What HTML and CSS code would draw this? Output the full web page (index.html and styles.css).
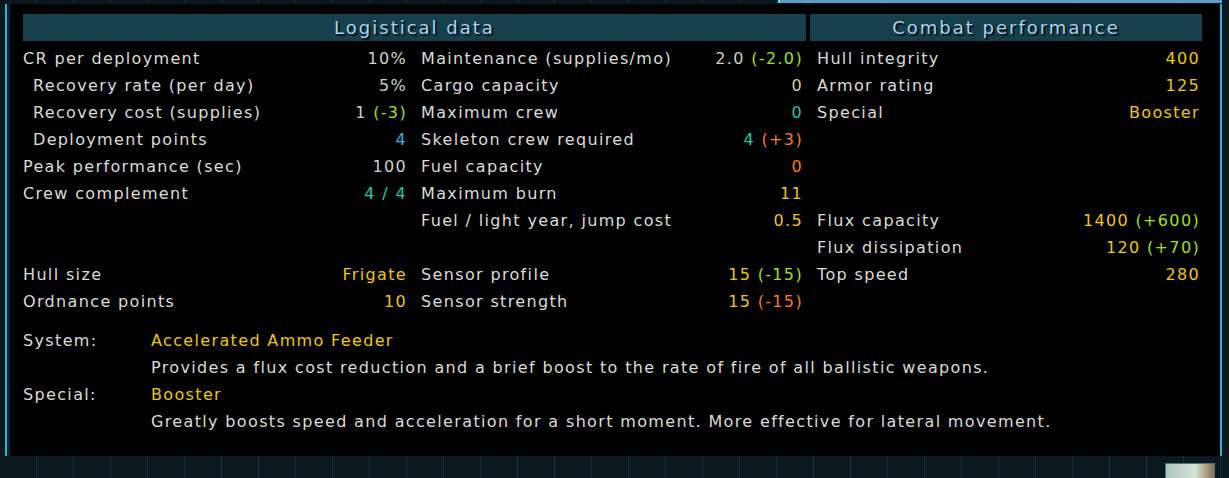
FILE: index.html
```html
<!DOCTYPE html>
<html>
<head>
<meta charset="utf-8">
<link rel="stylesheet" href="styles.css">
</head>
<body>
<div class="screen">
  <div class="topbar"><div class="tab"></div></div>
  <div class="panel">
    <div class="heads">
      <div class="head h1">Logistical data</div>
      <div class="head h2">Combat performance</div>
    </div>
    <div class="cols">
      <div class="col">
        <div class="row"><span class="lbl">CR per deployment</span><span class="val">10%</span></div>
        <div class="row"><span class="lbl ind">Recovery rate (per day)</span><span class="val">5%</span></div>
        <div class="row"><span class="lbl ind">Recovery cost (supplies)</span><span class="val">1 <span class="grn">(-3)</span></span></div>
        <div class="row"><span class="lbl ind">Deployment points</span><span class="val blu">4</span></div>
        <div class="row"><span class="lbl">Peak performance (sec)</span><span class="val">100</span></div>
        <div class="row"><span class="lbl">Crew complement</span><span class="val teal">4 / 4</span></div>
        <div class="row"></div>
        <div class="row"></div>
        <div class="row"><span class="lbl">Hull size</span><span class="val yel">Frigate</span></div>
        <div class="row"><span class="lbl">Ordnance points</span><span class="val yel">10</span></div>
      </div>
      <div class="col">
        <div class="row"><span class="lbl">Maintenance (supplies/mo)</span><span class="val">2.0 <span class="grn">(-2.0)</span></span></div>
        <div class="row"><span class="lbl">Cargo capacity</span><span class="val tan">0</span></div>
        <div class="row"><span class="lbl">Maximum crew</span><span class="val teal">0</span></div>
        <div class="row"><span class="lbl">Skeleton crew required</span><span class="val teal">4 <span class="org">(+3)</span></span></div>
        <div class="row"><span class="lbl">Fuel capacity</span><span class="val org">0</span></div>
        <div class="row"><span class="lbl">Maximum burn</span><span class="val yel">11</span></div>
        <div class="row"><span class="lbl">Fuel / light year, jump cost</span><span class="val yel">0.5</span></div>
        <div class="row"></div>
        <div class="row"><span class="lbl">Sensor profile</span><span class="val yel">15 <span class="grn">(-15)</span></span></div>
        <div class="row"><span class="lbl">Sensor strength</span><span class="val yel">15 <span class="org">(-15)</span></span></div>
      </div>
      <div class="col">
        <div class="row"><span class="lbl">Hull integrity</span><span class="val yel">400</span></div>
        <div class="row"><span class="lbl">Armor rating</span><span class="val yel">125</span></div>
        <div class="row"><span class="lbl">Special</span><span class="val yel">Booster</span></div>
        <div class="row"></div>
        <div class="row"></div>
        <div class="row"></div>
        <div class="row"><span class="lbl">Flux capacity</span><span class="val yel">1400 <span class="grn">(+600)</span></span></div>
        <div class="row"><span class="lbl">Flux dissipation</span><span class="val yel">120 <span class="grn">(+70)</span></span></div>
        <div class="row"><span class="lbl">Top speed</span><span class="val yel">280</span></div>
        <div class="row"></div>
      </div>
    </div>
    <div class="info">
      <div class="ilbl">System:</div>
      <div class="iname">Accelerated Ammo Feeder</div>
      <div></div>
      <div class="idesc">Provides a flux cost reduction and a brief boost to the rate of fire of all ballistic weapons.</div>
      <div class="ilbl">Special:</div>
      <div class="iname">Booster</div>
      <div></div>
      <div class="idesc">Greatly boosts speed and acceleration for a short moment. More effective for lateral movement.</div>
    </div>
  </div>
  <div class="bottom"><div class="thumb"></div></div>
</div>
</body>
</html>
```

FILE: styles.css
```css
* { box-sizing: border-box; }
html, body { margin: 0; padding: 0; }
body {
  width: 1229px;
  height: 478px;
  overflow: hidden;
  background-color: #0b181e;
  background-image: repeating-linear-gradient(90deg, transparent 0 36px, #16303a 36px 37px);
  font-family: "DejaVu Sans", "Liberation Sans", sans-serif;
  font-size: 16px;
  letter-spacing: 1.35px;
  color: #dadcd6;
}
.screen { display: flex; flex-direction: column; width: 1229px; height: 478px; }
.topbar { height: 4px; display: flex; justify-content: flex-end; padding-right: 7px; }
.tab {
  width: 444px;
  height: 3px;
  background: #5f9dc6;
  border-left: 2px solid #7fd8f0;
}
.panel {
  margin-left: 5px;
  width: 1217px;
  height: 452px;
  background: #000;
  border-left: 2px solid #35afd4;
  border-right: 2px solid #35afd4;
  padding: 10px 0 0 16px;
  box-shadow: inset 3px 0 0 #0a2530;
}
.heads { display: flex; gap: 4px; margin-bottom: 4px; }
.head {
  height: 27px;
  background: #16404c;
  color: #a9d3f0;
  font-size: 18px;
  letter-spacing: 2px;
  line-height: 28px;
  text-align: center;
  text-shadow: 1px 1px 0 #08161c, 2px 2px 1px #08161c;
}
.h1 { width: 783px; }
.h2 { width: 392px; }
.cols { display: grid; grid-template-columns: 383px 381px 382px; column-gap: 15px; }
.row {
  height: 27px;
  line-height: 28px;
  display: flex;
  justify-content: space-between;
  white-space: nowrap;
}
.val { margin-right: -1px; }
.ind { padding-left: 10px; }
.val { color: #c8d4c6; }
.yel { color: #f0c60e; }
.grn { color: #9ee012; }
.org { color: #ff7a1a; }
.teal { color: #1fcaa2; }
.blu { color: #3aaede; }
.tan { color: #d6cf9e; }
.info {
  margin-top: 12px;
  display: grid;
  grid-template-columns: 128px auto;
  grid-auto-rows: 27px;
  line-height: 28px;
  white-space: nowrap;
}
.iname { color: #f0c60e; }
.bottom { flex: 1; display: flex; justify-content: flex-end; align-items: flex-end; padding-right: 14px; }
.thumb {
  width: 50px;
  height: 15px;
  border: 1px solid #3d7a80;
  border-bottom: none;
  background: linear-gradient(90deg, #a8c4bc, #d8e2d8 60%, #8a7050);
}
```
